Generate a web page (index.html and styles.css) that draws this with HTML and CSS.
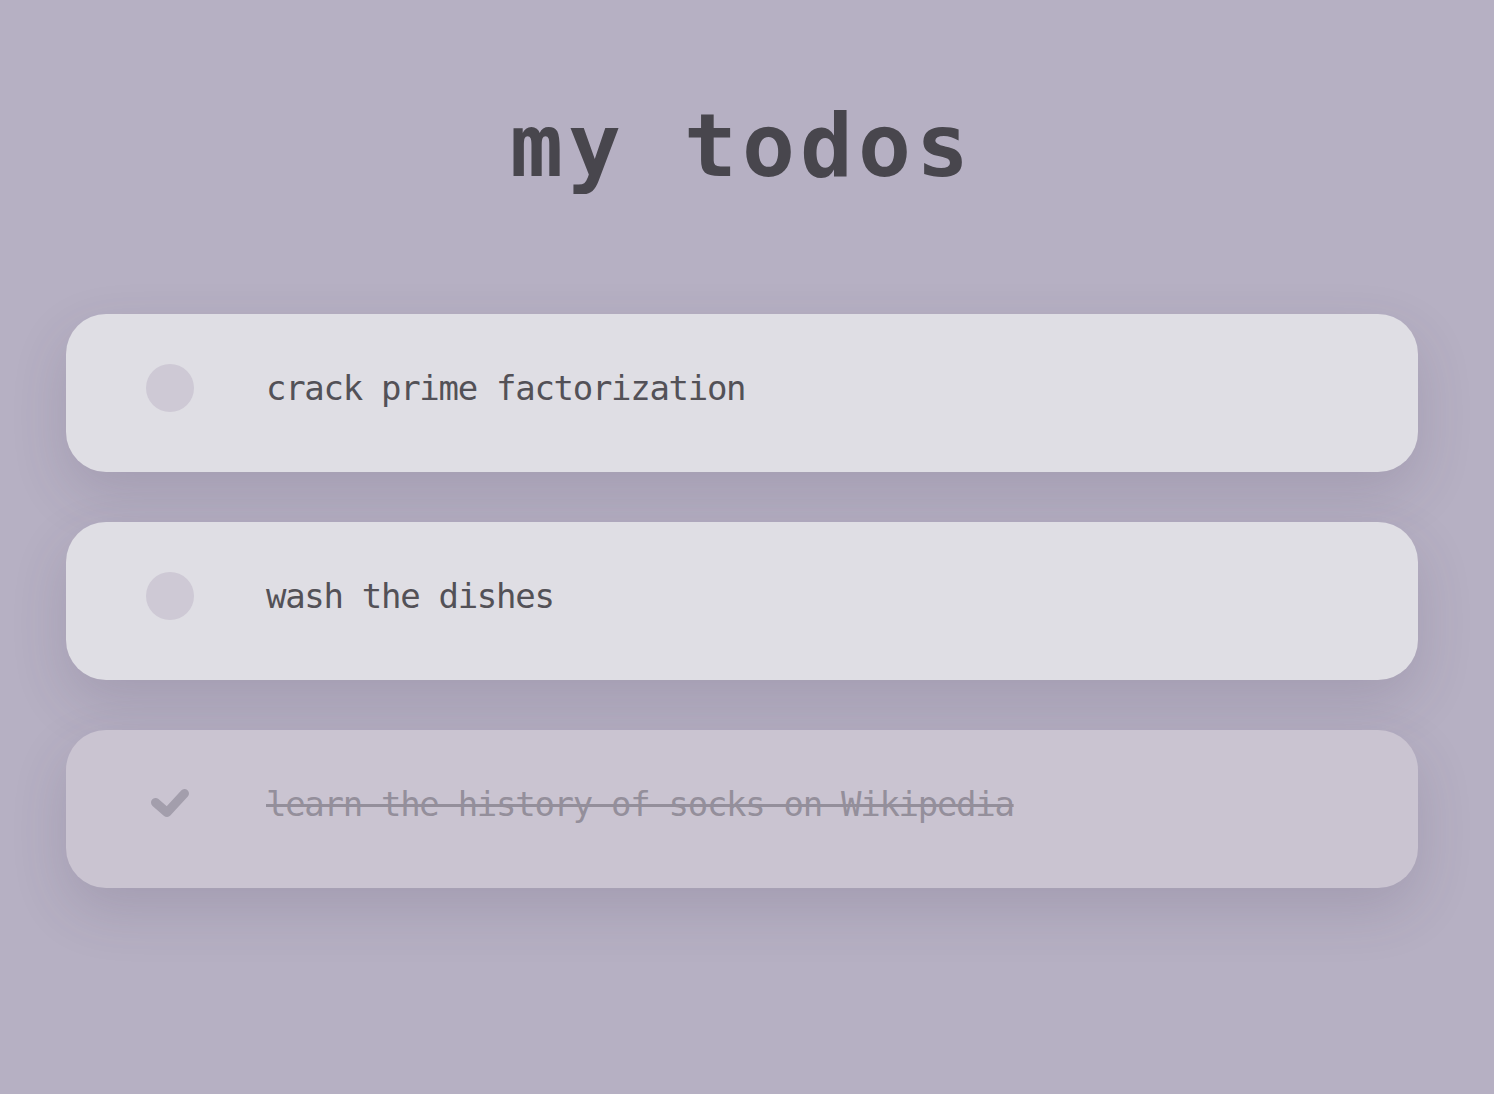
FILE: index.html
```html
<!DOCTYPE html>
<html lang="en">
<head>
<meta charset="utf-8">
<title>my todos</title>
<link rel="stylesheet" href="styles.css">
</head>
<body>
<main class="app">
  <h1 class="title">my todos</h1>
  <ul class="todo-list">
    <li class="todo">
      <span class="toggle"></span>
      <span class="todo-text">crack prime factorization</span>
    </li>
    <li class="todo">
      <span class="toggle"></span>
      <span class="todo-text">wash the dishes</span>
    </li>
    <li class="todo todo-done">
      <span class="toggle toggle-done">
        <svg class="check" viewBox="0 0 48 48" width="48" height="48" aria-hidden="true">
          <polyline points="9.5,22.5 21,32.5 38.5,13.5" fill="none" stroke="#a39eac" stroke-width="9" stroke-linecap="round" stroke-linejoin="round"/>
        </svg>
      </span>
      <span class="todo-text">learn the history of socks on Wikipedia</span>
    </li>
  </ul>
</main>
</body>
</html>
```

FILE: styles.css
```css
* {
  box-sizing: border-box;
}

html, body {
  margin: 0;
  height: 100%;
}

body {
  background: #b6b0c3;
  font-family: "DejaVu Sans Mono", "Liberation Mono", monospace;
  padding: 0 76px 0 66px;
}

.app {
  display: flex;
  flex-direction: column;
}

.title {
  margin: 0;
  padding-top: 96px;
  height: 314px;
  text-align: center;
  font-size: 88px;
  line-height: 100px;
  font-weight: 700;
  letter-spacing: 5px;
  color: #48464d;
}

.todo-list {
  list-style: none;
  margin: 0;
  padding: 0;
  display: flex;
  flex-direction: column;
  gap: 50px;
}

.todo {
  display: flex;
  align-items: flex-start;
  gap: 72px;
  height: 158px;
  padding: 50px 80px 0 80px;
  background: #dfdee4;
  border-radius: 40px;
  box-shadow: 0 22px 55px rgba(70, 55, 90, 0.16);
}

.toggle {
  flex: none;
  width: 48px;
  height: 48px;
  border-radius: 50%;
  background: #cec9d5;
}

.toggle-done {
  background: transparent;
}

.check {
  display: block;
}

.todo-text {
  font-size: 34px;
  letter-spacing: -1.3px;
  line-height: 48px;
  color: #535157;
}

.todo-done {
  background: #cac4d1;
}

.todo-done .todo-text {
  color: #948f9b;
  text-decoration: line-through;
  text-decoration-thickness: 3px;
}
```
